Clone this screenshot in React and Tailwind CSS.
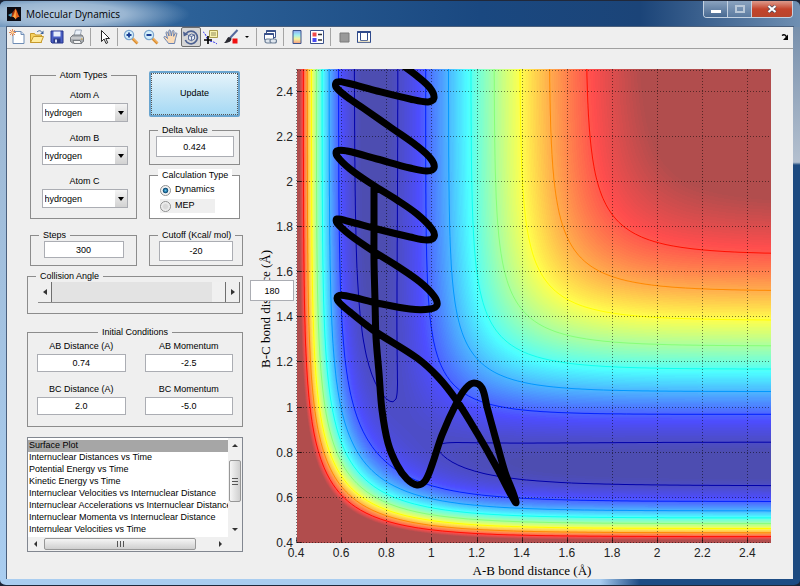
// src/App.jsx

import React from "react";

/* ---------- Potential energy surface (collinear H + H2, LEPS) ---------- */

const SIZE = 474;
const R_MIN = 0.4;
const R_MAX = 2.5;
const E_MIN = -109.5;
const E_MAX = -20;
const DE = 109.5;
const BETA = 1.942;
const RE = 0.7414;
const SATO = 0.19;
const BAND_COUNT = 160;

const pair = (r) => {
  const y = Math.exp(-BETA * (r - RE));
  const singlet = DE * (y * y - 2 * y) * (1 + SATO);
  const triplet = 0.5 * DE * (y * y + 2 * y) * (1 - SATO);
  return [(singlet + triplet) / 2, (singlet - triplet) / 2];
};

const energy = (ab, bc) => {
  const [q1, j1] = pair(ab);
  const [q2, j2] = pair(bc);
  const [q3, j3] = pair(ab + bc);
  const exchange = Math.sqrt(
    0.5 * ((j1 - j2) ** 2 + (j2 - j3) ** 2 + (j3 - j1) ** 2)
  );
  return (q1 + q2 + q3 - exchange) / (1 + SATO);
};

const toBond = (px) => R_MIN + (px / SIZE) * (R_MAX - R_MIN);
const toPx = (r) => ((r - R_MIN) / (R_MAX - R_MIN)) * SIZE;

const clamp = (v, lo, hi) => Math.min(hi, Math.max(lo, v));

const jet = (t, alpha) => {
  const channel = (c) => {
    const v = clamp(1.5 - Math.abs(4 * t - c), 0, 1);
    return Math.round(255 * (v * alpha + 1 - alpha));
  };
  return `rgb(${channel(3)},${channel(2)},${channel(1)})`;
};

const scaleEnergy = (e) => clamp((e - E_MIN) / (E_MAX - E_MIN), 0.015, 0.985);

// one path per colour, built from horizontal runs
const BANDS = (() => {
  const paths = {};
  for (let y = 0; y < SIZE; y += 1) {
    const bc = toBond(SIZE - y - 0.5);
    let start = 0;
    let last = -1;
    for (let x = 0; x <= SIZE; x += 1) {
      const band =
        x < SIZE
          ? Math.floor(scaleEnergy(energy(toBond(x + 0.5), bc)) * BAND_COUNT)
          : -1;
      if (band !== last) {
        if (last >= 0) {
          paths[last] =
            (paths[last] || "") + `M${start} ${y}h${x - start}v1h${start - x}z`;
        }
        start = x;
        last = band;
      }
    }
  }
  return Object.entries(paths).map(([band, d]) => ({
    band,
    d,
    color: jet((Number(band) + 0.5) / BAND_COUNT, 0.7),
  }));
})();

const LEVELS = [-105.7, -95.4, -85, -74.5, -64.1, -53.6, -43.2, -32.6];

const CONTOURS = (() => {
  const step = 3;
  const n = SIZE / step;
  const grid = [];
  for (let j = 0; j <= n; j += 1) {
    const row = [];
    for (let i = 0; i <= n; i += 1) {
      row.push(energy(toBond(i * step), toBond(SIZE - j * step)));
    }
    grid.push(row);
  }
  return LEVELS.map((level) => {
    let d = "";
    for (let j = 0; j < n; j += 1) {
      for (let i = 0; i < n; i += 1) {
        const corners = [
          [i, j],
          [i + 1, j],
          [i + 1, j + 1],
          [i, j + 1],
        ];
        const hits = [];
        corners.forEach(([ax, ay], k) => {
          const [bx, by] = corners[(k + 1) % 4];
          const a = grid[ay][ax] - level;
          const b = grid[by][bx] - level;
          if (a < 0 !== b < 0) {
            const t = a / (a - b);
            hits.push(
              `${((ax + (bx - ax) * t) * step).toFixed(1)} ${(
                (ay + (by - ay) * t) *
                step
              ).toFixed(1)}`
            );
          }
        });
        if (hits.length >= 2) d += `M${hits[0]}L${hits[1]}`;
      }
    }
    return { level, d, color: jet(scaleEnergy(level), 1) };
  });
})();

const TRAJECTORY = [
  [77, 117], [77, 158], [77, 191], [78, 231], [79, 268], [82, 304],
  [85, 341], [91, 374], [100, 396], [110, 410], [120, 416], [128, 412],
  [135, 396], [145, 366], [160, 333], [169, 319], [177, 314], [185, 319],
  [190, 338], [199, 371], [208, 403], [219, 433], [213, 424], [200, 399],
  [180, 364], [160, 332], [141, 308], [120, 289], [76, 261], [53, 243],
  [41, 232], [41, 227], [50, 227], [80, 234], [113, 240], [133, 240],
  [140, 236], [137, 227], [123, 213], [100, 197], [76, 182], [53, 166],
  [40, 154], [40, 150], [50, 152], [80, 160], [113, 168], [130, 171],
  [137, 168], [135, 160], [120, 145], [100, 131], [76, 116], [53, 100],
  [40, 87], [40, 82], [50, 82], [80, 90], [113, 99], [130, 102],
  [137, 99], [134, 90], [120, 77], [96, 60], [66, 39], [50, 28],
  [39, 18], [40, 13], [50, 14], [80, 22], [113, 30], [131, 33],
  [137, 29], [133, 19], [120, 7], [108, -2], [96, -10],
];

const smooth = (pts) => {
  let d = `M${pts[0][0]} ${pts[0][1]}`;
  for (let i = 0; i < pts.length - 1; i += 1) {
    const p0 = pts[i - 1] || pts[i];
    const p1 = pts[i];
    const p2 = pts[i + 1];
    const p3 = pts[i + 2] || p2;
    // keep each tangent no longer than its own segment
    const len = Math.hypot(p2[0] - p1[0], p2[1] - p1[1]) / 3;
    const t1 = Math.hypot(p2[0] - p0[0], p2[1] - p0[1]) || 1;
    const t2 = Math.hypot(p3[0] - p1[0], p3[1] - p1[1]) || 1;
    d += `C${p1[0] + ((p2[0] - p0[0]) / t1) * len} ${
      p1[1] + ((p2[1] - p0[1]) / t1) * len
    } ${p2[0] - ((p3[0] - p1[0]) / t2) * len} ${
      p2[1] - ((p3[1] - p1[1]) / t2) * len
    } ${p2[0]} ${p2[1]}`;
  }
  return d;
};

const TICKS = [0.4, 0.6, 0.8, 1, 1.2, 1.4, 1.6, 1.8, 2, 2.2, 2.4];

const SurfacePlot = () => (
  <svg
    viewBox="0 0 535 530"
    className="block w-full"
    role="img"
    aria-label="Potential energy surface"
  >
    <defs>
      <clipPath id="axes">
        <rect width={SIZE} height={SIZE} />
      </clipPath>
    </defs>
    <g transform="translate(39 20)">
      <g shapeRendering="crispEdges">
        {BANDS.map((item) => (
          <path key={item.band} d={item.d} fill={item.color} />
        ))}
      </g>

      {/* Contours */}
      <g fill="none" strokeWidth="1">
        {CONTOURS.map((line) => (
          <path key={line.level} d={line.d} stroke={line.color} />
        ))}
      </g>

      {/* Grid */}
      <g
        stroke="#000"
        strokeOpacity="0.5"
        strokeDasharray="1 2"
        shapeRendering="crispEdges"
      >
        {TICKS.map((t) => {
          const p = Math.round(toPx(t));
          return (
            <React.Fragment key={t}>
              <path d={`M${p - 0.5} 0V${SIZE}`} />
              <path d={`M0 ${SIZE - p - 0.5}H${SIZE}`} />
            </React.Fragment>
          );
        })}
        <path d={`M0 1.5H${SIZE}`} />
      </g>
      <path
        d={TICKS.map((t) => {
          const p = Math.round(toPx(t));
          return `M${p - 0.5} ${SIZE}v-5M0 ${SIZE - p - 0.5}h5`;
        }).join("")}
        stroke="#000"
        strokeOpacity="0.6"
        shapeRendering="crispEdges"
      />

      {/* Trajectory */}
      <g clipPath="url(#axes)">
        <path
          d={smooth(TRAJECTORY)}
          fill="none"
          stroke="#000"
          strokeWidth="7"
          strokeLinejoin="round"
        />
      </g>

      <g className="font-['Liberation_Sans',Arial,sans-serif] text-[12px]" fill="#222">
        {TICKS.map((t) => (
          <React.Fragment key={t}>
            <text x={toPx(t) - 1} y={SIZE + 14} textAnchor="middle">
              {t}
            </text>
            <text x="-4" y={SIZE - toPx(t) + 4} textAnchor="end">
              {t}
            </text>
          </React.Fragment>
        ))}
      </g>
      <g className="font-['Liberation_Serif',serif] text-[13px]" fill="#000">
        <text x="235" y={SIZE + 32} textAnchor="middle">
          A-B bond distance (Å)
        </text>
        <text transform="translate(-27 240) rotate(-90)" textAnchor="middle">
          B-C bond distance (Å)
        </text>
      </g>
    </g>
  </svg>
);

/* ---------- Toolbar ---------- */

const Icon = ({ children }) => (
  <svg viewBox="0 0 16 16" className="h-4 w-4" aria-hidden="true">
    {children}
  </svg>
);

const Lens = ({ plus }) => (
  <Icon>
    <path d="M9 9l5.500 5.500" stroke="#d98a2b" strokeWidth="2.600" />
    <path d="M9.600 9l5 5" stroke="#ffc77a" strokeWidth="1" />
    <circle cx="6" cy="6" r="4.600" fill="#d4effa" stroke="#7da6cf" strokeWidth="1.200" />
    <path d={plus ? "M3.500 6h5M6 3.500v5" : "M3.500 6h5"} stroke="#1b3f95" strokeWidth="1.800" />
  </Icon>
);

const ICONS = {
  new: (
    <Icon>
      <path d="M4 2.500h8l3 3v9H4z" fill="#fff" stroke="#6f8db5" />
      <path d="M12 2.500v3h3" fill="#cfdcf0" stroke="#6f8db5" />
      <path d="M3.500 0v7M0 3.500h7M1 1l5 5M6 1L1 6" stroke="#e2793f" strokeWidth="0.9" />
      <circle cx="3.500" cy="3.500" r="1.300" fill="#ffd9a0" />
    </Icon>
  ),
  open: (
    <Icon>
      <path d="M1.500 13.500V4.500h4l1 1.500h6v7.500z" fill="#f5d060" stroke="#c79a2b" />
      <path d="M1.500 13.500l3-6h10l-2.500 6z" fill="#ffeb9c" stroke="#c79a2b" />
      <path d="M8 3c2-2 4-1.500 5 .5" fill="none" stroke="#41659d" />
      <path d="M14.500 1.500v3.500h-3.300z" fill="#41659d" />
    </Icon>
  ),
  save: (
    <Icon>
      <path d="M2 2h12v12H3l-1-1z" fill="#4a5fc4" stroke="#26358c" />
      <path d="M4.500 2.500h7v5h-7z" fill="#e8eefb" />
      <path d="M4.500 9.500h7v4.500h-7z" fill="#2b3a86" />
      <path d="M6 10.500h2v3H6z" fill="#dfe6f7" />
    </Icon>
  ),
  print: (
    <Icon>
      <path d="M5 7l1.500-6h6L11 7z" fill="#eaf1fa" stroke="#8b98a8" strokeWidth="0.8" />
      <path d="M1.500 8.500L4 6h9l1.500 2.500v4l-2 1.500h-9l-2-1.500z" fill="#a9adb2" stroke="#63676c" strokeWidth="0.8" />
      <path d="M2 9h12" stroke="#e6e6e6" />
      <path d="M4 11.500h7l1.500 3H5z" fill="#f4f4f4" stroke="#63676c" strokeWidth="0.8" />
      <path d="M12 10h1.500" stroke="#d9a520" />
    </Icon>
  ),
  pointer: (
    <Icon>
      <path d="M5.500 1.500v11l2.600-2.500 1.900 4.500 1.700-.8L9.800 9.500h3.700z" fill="#fff" stroke="#111" strokeWidth="0.9" />
    </Icon>
  ),
  hand: (
    <Icon>
      <path
        d="M5.500 14.500C4 12 2 10.500 1 8.500c-.3-1 1-1.500 2-.5l1.500 1.500L3 4c-.2-1.300 1.300-1.600 1.700-.5L6 7 5.800 2c0-1.300 1.600-1.300 1.800 0L8.300 7l1-4.800c.3-1.200 1.800-.9 1.700.3L10.600 7.300l1.600-3c.6-1 1.900-.4 1.600.7-.8 3-1.200 4-1.600 6l-.7 3.500z"
        fill="#fbdcb8"
        stroke="#5a77ad"
        strokeWidth="0.9"
      />
    </Icon>
  ),
  rotate: (
    <Icon>
      <path d="M3.200 4.500A6.300 6.300 0 1 1 2.300 11" fill="none" stroke="#4d6191" strokeWidth="1.700" />
      <path d="M0 2.500l.8 5 4.500-2.300z" fill="#4d6191" />
      <path d="M5.500 6.500l3-1.500 3 1v4l-3 1.700-3-1.200zM5.500 6.500l3 1 3-1.500M8.500 7.500v4" fill="#e5ebf5" stroke="#4d6191" strokeWidth="0.900" />
    </Icon>
  ),
  cursor: (
    <Icon>
      <path d="M6.500 1.500h8v7h-8z" fill="#f7f3b0" stroke="#a79b4e" />
      <path d="M8 4h5M8 6h5" stroke="#8b8452" strokeWidth="0.900" />
      <path d="M0 3c3 1 3 6 5 8s6 1 9 4" fill="none" stroke="#3b3bea" strokeDasharray="2 1" />
      <path d="M5 7v8M1 11h8" stroke="#000" strokeWidth="1.700" />
    </Icon>
  ),
  brush: (
    <Icon>
      <path d="M14.500 1L7 9" stroke="#54689c" strokeWidth="2" />
      <path d="M8.500 9.500c0 3-3 4.500-7.500 4.500 2.500-1.500 2.500-5.500 5-6z" fill="#2b2b33" />
      <path d="M9.500 9.500h5v5h-5z" fill="#f01010" />
    </Icon>
  ),
  link: (
    <Icon>
      <path d="M4.500 1.500h9v7h-9z" fill="#fff" stroke="#3b528b" />
      <path d="M4.500 2h9" stroke="#3b528b" strokeWidth="2" />
      <path d="M2.500 4.500h9v6h-9z" fill="#fff" stroke="#3b528b" />
      <path d="M2.500 5h9" stroke="#3b528b" strokeWidth="2" />
      <rect x="3" y="10" width="6.500" height="4" rx="2" fill="#dfe6ee" stroke="#6d7f96" strokeWidth="1.200" />
      <rect x="8" y="10" width="6.500" height="4" rx="2" fill="#dfe6ee" stroke="#6d7f96" strokeWidth="1.200" />
    </Icon>
  ),
  colorbar: (
    <Icon>
      <defs>
        <linearGradient id="bar" x1="0" y1="0" x2="0" y2="1">
          <stop offset="0" stopColor="#8fa6f5" />
          <stop offset="0.35" stopColor="#9ff0f0" />
          <stop offset="0.65" stopColor="#f6f29a" />
          <stop offset="1" stopColor="#f59a80" />
        </linearGradient>
      </defs>
      <path d="M4 1.500h8v13H4z" fill="url(#bar)" stroke="#3b528b" />
    </Icon>
  ),
  legend: (
    <Icon>
      <path d="M1.500 1.500h13v13h-13z" fill="#fff" stroke="#3b528b" />
      <path d="M3.500 3.500h4v4h-4z" fill="#f04a4a" />
      <path d="M3.500 9h4v4h-4z" fill="#4a4af0" />
      <path d="M9 5.500h4M9 11h4" stroke="#333" strokeWidth="1.300" />
    </Icon>
  ),
  hide: (
    <Icon>
      <path d="M4 4h9v9H4z" fill="#999" stroke="#7b7b7b" />
    </Icon>
  ),
  dock: (
    <Icon>
      <path d="M1.500 2.500h13v11h-13z" fill="#fff" stroke="#2f4a8c" />
      <path d="M1.500 3h13" stroke="#2f4a8c" strokeWidth="2" />
      <path d="M4.500 4v7.500h7V4" fill="#fff" stroke="#2f4a8c" />
      <path d="M2 12.500h12" stroke="#e8dfc0" strokeWidth="1.500" />
    </Icon>
  ),
};

const ToolButton = ({ label, active, children }) => (
  <button
    type="button"
    aria-label={label}
    className={
      active
        ? "flex h-5 w-5 items-center justify-center rounded-xs border border-[#6e6e6e] bg-[#d6d6d6]"
        : "flex h-5 w-5 items-center justify-center"
    }
  >
    {children}
  </button>
);

const Divider = () => (
  <span className="mx-[3px] h-[18px] w-px bg-[#a5a5a5]" />
);

const Toolbar = () => (
  <div className="flex h-[22px] items-center border-b border-[#a0a0a0] pb-0.5">
    <ToolButton label="New Figure">{ICONS.new}</ToolButton>
    <ToolButton label="Open File">{ICONS.open}</ToolButton>
    <ToolButton label="Save Figure">{ICONS.save}</ToolButton>
    <ToolButton label="Print Figure">{ICONS.print}</ToolButton>
    <Divider />
    <ToolButton label="Edit Plot">{ICONS.pointer}</ToolButton>
    <Divider />
    <ToolButton label="Zoom In"><Lens plus /></ToolButton>
    <ToolButton label="Zoom Out"><Lens /></ToolButton>
    <ToolButton label="Pan">{ICONS.hand}</ToolButton>
    <ToolButton label="Rotate 3D" active>{ICONS.rotate}</ToolButton>
    <ToolButton label="Data Cursor">{ICONS.cursor}</ToolButton>
    <ToolButton label="Brush">{ICONS.brush}</ToolButton>
    <button type="button" aria-label="Brush colours" className="flex w-3 justify-center">
      <svg viewBox="0 0 4 2" className="h-0.5 w-1"><path d="M0 0h4L2 2z" /></svg>
    </button>
    <Divider />
    <ToolButton label="Link Plot">{ICONS.link}</ToolButton>
    <Divider />
    <ToolButton label="Insert Colorbar">{ICONS.colorbar}</ToolButton>
    <ToolButton label="Insert Legend">{ICONS.legend}</ToolButton>
    <Divider />
    <ToolButton label="Hide Plot Tools">{ICONS.hide}</ToolButton>
    <ToolButton label="Show Plot Tools">{ICONS.dock}</ToolButton>
    <button type="button" aria-label="Dock Figure" className="mr-1 ml-auto">
      <svg viewBox="0 0 8 8" className="h-2 w-2">
        <path d="M1 2.500C3 1 4.500 2 5.500 4" fill="none" stroke="#000" strokeWidth="1.400" />
        <path d="M7 1.500V7H2z" />
      </svg>
    </button>
  </div>
);

/* ---------- Controls ---------- */

const Panel = ({ title, className = "", legendClass = "ml-2", children }) => (
  <fieldset className={`min-w-0 border border-[#8c8c8c] ${className}`}>
    <legend className={`px-1 leading-3 ${legendClass}`}>{title}</legend>
    {children}
  </fieldset>
);

const Field = ({ label, value, className = "" }) => (
  <input
    type="text"
    aria-label={label}
    defaultValue={value}
    className={`block border border-[#abadb3] bg-white text-center ${className}`}
  />
);

const AtomSelect = ({ id, label }) => (
  <div className="flex flex-col items-center">
    <label htmlFor={id} className="leading-4">{label}</label>
    <div className="relative w-[86px]">
      <select
        id={id}
        defaultValue="hydrogen"
        className="block h-[19px] w-full appearance-none border border-[#abadb3] bg-white pl-0.5 leading-4"
      >
        <option>hydrogen</option>
      </select>
      <span className="pointer-events-none absolute inset-y-px right-px flex w-3 items-center justify-center bg-gradient-to-b from-[#f4f4f4] to-[#d2d2d2]">
        <svg viewBox="0 0 6 4" className="h-1 w-1.5"><path d="M0 0h6L3 4z" /></svg>
      </span>
    </div>
  </div>
);

const Radio = ({ label, checked, className = "" }) => (
  <label className={`flex h-[14px] items-center gap-1 ${className}`}>
    <input
      type="radio"
      name="calculation"
      defaultChecked={checked}
      className="h-[11px] w-[11px] appearance-none rounded-full border border-[#8e8f8f] bg-[radial-gradient(circle,#d8d8d8_30%,#f6f6f6_70%)] checked:bg-[radial-gradient(circle,#5cc3ee_0%,#0d4a74_38%,#f4f4f4_50%)]"
    />
    {label}
  </label>
);

const Condition = ({ label, value }) => (
  <label className="flex flex-col">
    <span className="text-center leading-4">{label}</span>
    <input
      type="text"
      defaultValue={value}
      className="block h-[18px] w-full border border-[#abadb3] bg-white text-center"
    />
  </label>
);

const Arrow = ({ d, className = "" }) => (
  <svg viewBox="0 0 6 6" className={`h-1.5 w-1.5 ${className}`}>
    <path d={d} fill="#333" />
  </svg>
);

const PLOTS = [
  "Surface Plot",
  "Internuclear Distances vs Time",
  "Potential Energy vs Time",
  "Kinetic Energy vs Time",
  "Internuclear Velocities vs Internuclear Distance",
  "Internuclear Accelerations vs Internuclear Distance",
  "Internuclear Momenta vs Internuclear Distance",
  "Internulear Velocities vs Time",
];

const PlotList = () => (
  <div className="mt-2.5 grid h-[115px] grid-cols-[1fr_14px] grid-rows-[1fr_14px] border border-[#828790] bg-white">
    <select
      size={8}
      defaultValue="Surface Plot"
      aria-label="Plot"
      className="h-full w-full min-w-0 overflow-hidden pt-0.5 [scrollbar-width:none]"
    >
      {PLOTS.map((plot) => (
        <option
          key={plot}
          className="h-3 min-h-0 px-px py-0 leading-3 text-black checked:bg-[linear-gradient(#a6a6a6,#a6a6a6)] checked:text-black"
        >
          {plot}
        </option>
      ))}
    </select>
    <div className="flex flex-col items-center justify-between bg-[#f0f0f0] py-1">
      <Arrow d="M0 5h6L3 2z" />
      <div className="mt-3 mb-auto flex h-[42px] w-3 items-center justify-center rounded-xs border border-[#979797] bg-gradient-to-r from-[#f5f5f5] to-[#cfcfcf]">
        <svg viewBox="0 0 6 7" className="h-[7px] w-1.5">
          <path d="M0 .5h6M0 3.500h6M0 6.500h6" stroke="#555" />
        </svg>
      </div>
      <Arrow d="M0 1h6L3 4z" />
    </div>
    <div className="flex items-center bg-[#f0f0f0] pr-1 pl-1">
      <Arrow d="M5 0v6L2 3z" />
      <div className="ml-1.5 flex h-3 w-[152px] items-center justify-center rounded-xs border border-[#979797] bg-gradient-to-b from-[#f5f5f5] to-[#cfcfcf]">
        <svg viewBox="0 0 7 6" className="h-1.5 w-[7px]">
          <path d="M.5 0v6M3.500 0v6M6.500 0v6" stroke="#555" />
        </svg>
      </div>
      <Arrow d="M1 0v6l3-3z" className="ml-auto" />
    </div>
    <div className="bg-[#f0f0f0]" />
  </div>
);

const Controls = () => (
  <div className="w-[216px] shrink-0 pt-5 text-[9px] text-black">
    <div className="grid grid-cols-[107px_1fr] gap-x-3 gap-y-2.5 pl-[3px]">
      <Panel title="Atom Types" className="h-[150px]" legendClass="mx-auto">
        <div className="mt-1.5 flex flex-col gap-2 pl-0.5">
          <AtomSelect id="atom-a" label="Atom A" />
          <AtomSelect id="atom-b" label="Atom B" />
          <AtomSelect id="atom-c" label="Atom C" />
        </div>
      </Panel>

      <div className="mr-[3px] flex flex-col pt-0.5">
        <button
          type="button"
          className="h-[46px] rounded-xs border-2 border-[#6aa5cf] bg-gradient-to-b from-[#e6f4fb] via-[#c4e5f6] via-50% to-[#a4d9f5]"
        >
          <span className="flex h-full items-center justify-center border border-dotted border-[#555]">
            Update
          </span>
        </button>
        <Panel title="Delta Value" className="mt-[7px] h-[41px]">
          <Field label="Delta Value" value="0.424" className="mx-auto h-[21px] w-[78px]" />
        </Panel>
        <Panel
          title="Calculation Type"
          className="mt-1 h-[50px] bg-white"
          legendClass="ml-2 bg-white"
        >
          <Radio label="Dynamics" checked className="mt-0.5 ml-2.5" />
          <Radio label="MEP" className="mt-0.5 mr-6 ml-2.5 bg-[#efefef]" />
        </Panel>
      </div>

      <Panel title="Steps" className="h-[37px]">
        <Field label="Steps" value="300" className="mx-auto h-[17px] w-20" />
      </Panel>
      <Panel title="Cutoff (Kcal/ mol)" className="h-[37px]">
        <Field label="Cutoff" value="-20" className="mx-auto h-5 w-[74px]" />
      </Panel>
    </div>

    {/* Collision angle */}
    <div className="relative mt-1">
      <Panel title="Collision Angle" className="h-11">
        <div className="mr-0.5 ml-2.5 flex h-[21px] border-b border-[#8c8c8c]">
          <button type="button" aria-label="Decrease angle" className="flex w-3.5 items-center justify-center border-r border-[#6f6f6f]">
            <Arrow d="M5 0v6L1 3z" />
          </button>
          <input
            type="range"
            min="0"
            max="180"
            defaultValue="180"
            aria-label="Collision Angle"
            className="h-5 min-w-0 flex-1 appearance-none bg-[#e3e3e3] [&::-webkit-slider-thumb]:h-5 [&::-webkit-slider-thumb]:w-3.5 [&::-webkit-slider-thumb]:appearance-none [&::-webkit-slider-thumb]:border-r [&::-webkit-slider-thumb]:border-[#6f6f6f] [&::-webkit-slider-thumb]:bg-[#f0f0f0]"
          />
          <button type="button" aria-label="Increase angle" className="flex w-3.5 items-center justify-center border-r border-[#6f6f6f]">
            <Arrow d="M1 0v6l4-3z" />
          </button>
        </div>
      </Panel>
      <Field
        label="Angle"
        value="180"
        className="absolute top-2.5 left-full z-10 ml-[7px] h-[21px] w-11"
      />
    </div>

    <Panel title="Initial Conditions" className="mt-3 h-[101px]" legendClass="mx-auto">
      <div className="grid grid-cols-2 gap-x-[19px] gap-y-[9px] px-[9px]">
        <Condition label="AB Distance (A)" value="0.74" />
        <Condition label="AB Momentum" value="-2.5" />
        <Condition label="BC Distance (A)" value="2.0" />
        <Condition label="BC Momentum" value="-5.0" />
      </div>
    </Panel>

    <PlotList />
  </div>
);

/* ---------- Window ---------- */

const TitleBar = () => (
  <header className="flex h-[26px] items-center bg-[radial-gradient(ellipse_130px_22px_at_60px_13px,#b4c9de_0%,#9ab6d2_50%,transparent_100%),linear-gradient(90deg,#3f73a8_0%,#2b6097_25%,#1a4880_60%,#1b4478_80%,#6f8fb2_100%)] px-[7px]">
    <svg viewBox="0 0 14 14" className="h-3.5 w-3.5" aria-hidden="true">
      <rect width="14" height="14" fill="#0a0a12" />
      <path d="M1 8l4-2 1.500 1.500L4 10z" fill="#4aa3c7" />
      <path d="M5 6l3.500-4.500L7 8 4.500 10z" fill="#8d2f14" />
      <path d="M8.500 1.500C10 3 11 8 13 10.500c-2-1-3 0-4.500 2C8 10.500 6.500 9.500 4.500 10 7 8 7.500 4 8.500 1.500z" fill="#e8611c" />
      <path d="M8.500 1.500c.3 3 .5 6 0 11-.8-2-1.500-2.500-2.500-2.500 1.500-2 2-5 2.500-8.500z" fill="#f9b04a" />
    </svg>
    <h1 className="ml-[5px] font-['Open_Sans',sans-serif] text-[10px] text-black">
      Molecular Dynamics
    </h1>
    <div className="ml-auto flex h-[17px] self-start overflow-hidden rounded-b border border-t-0 border-[#c4d2e2]">
      <button type="button" aria-label="Minimize" className="flex w-6 items-center justify-center border-r border-[#c4d2e2] bg-gradient-to-b from-[#8ba3bf] to-[#486a92]">
        <span className="mt-1 h-[3px] w-2.5 bg-white" />
      </button>
      <button type="button" aria-label="Maximize" className="flex w-6 items-center justify-center border-r border-[#c4d2e2] bg-gradient-to-b from-[#8ba3bf] to-[#5c7ba0]">
        <span className="h-2 w-2.5 border-2 border-[#b9c8d8]" />
      </button>
      <button type="button" aria-label="Close" className="flex w-10 items-center justify-center bg-gradient-to-b from-[#dc9a8c] via-[#c4442c] to-[#b8452c]">
        <svg viewBox="0 0 10 8" className="h-2 w-2.5">
          <path d="M1.500 1l7 6M8.500 1l-7 6" stroke="#4b4b5b" strokeWidth="3.500" />
          <path d="M1.500 1l7 6M8.500 1l-7 6" stroke="#fff" strokeWidth="2.200" />
        </svg>
      </button>
    </div>
  </header>
);

const App = () => (
  <div className="min-h-screen bg-[#1c2436]">
    <div className="flex min-h-screen flex-col overflow-hidden rounded-md border-t border-b border-[#20283a] font-['Liberation_Sans',Arial,sans-serif]">
      <TitleBar />
      <div className="flex flex-1">
        <div className="w-[7px] bg-gradient-to-b from-[#9db6d0] to-[#a9cdf0]" />
        <main className="min-w-0 flex-1 bg-[#efefef] outline outline-[#4a5f7c]">
          <Toolbar />
          <div className="flex pl-5">
            <Controls />
            <div className="ml-[15px] min-w-0 flex-1">
              <SurfacePlot />
            </div>
          </div>
        </main>
        <div className="w-[7px] bg-[linear-gradient(#7890ac_0%,#b4c0cf_24.500%,#1d4a80_25%)]" />
      </div>
      <div className="h-1.5 bg-gradient-to-r from-[#a9cdf0] from-75% to-[#1d4c84] to-80%" />
    </div>
  </div>
);

export default App;
